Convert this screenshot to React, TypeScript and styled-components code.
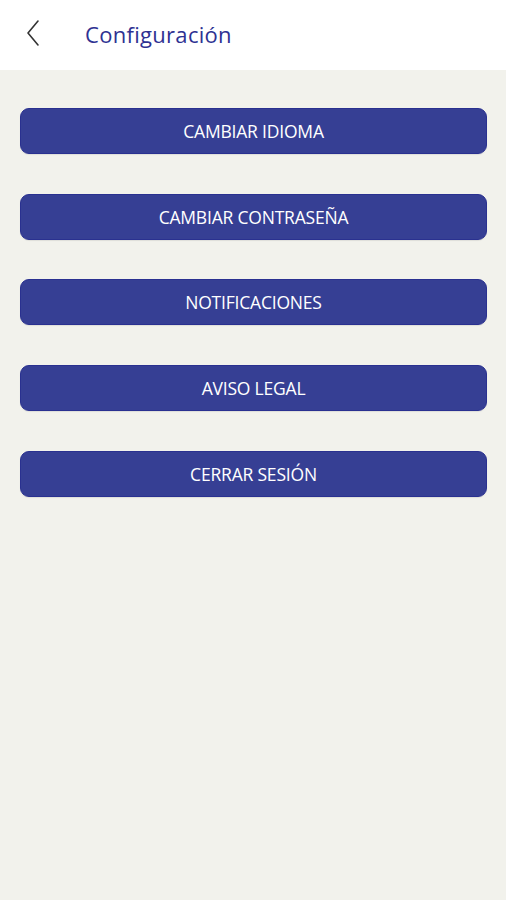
import React from 'react';
import styled, { createGlobalStyle } from 'styled-components';

const GlobalStyle = createGlobalStyle`
  html, body {
    margin: 0;
    padding: 0;
    background: #f2f2ec;
  }
  body {
    font-family: "Open Sans", "Noto Sans", sans-serif;
  }
`;

const OPTIONS = [
  'CAMBIAR IDIOMA',
  'CAMBIAR CONTRASEÑA',
  'NOTIFICACIONES',
  'AVISO LEGAL',
  'CERRAR SESIÓN',
];

export default function App() {
  return (
    <>
      <GlobalStyle />
      <Screen>
        <Header>
          <BackButton aria-label="Volver">
            <svg width="16" height="28" viewBox="0 0 16 28" fill="none">
              <path d="M13 2 L3 14 L13 26" stroke="#333" strokeWidth="1.6" strokeLinecap="round" strokeLinejoin="round" />
            </svg>
          </BackButton>
          <Title>Configuración</Title>
        </Header>

        <List>
          {OPTIONS.map((label) => (
            <OptionButton key={label}>{label}</OptionButton>
          ))}
        </List>
      </Screen>
    </>
  );
}

const Screen = styled.div`
  min-height: 900px;
  background: #f2f2ec;
`;

const Header = styled.header`
  height: 70px;
  background: #ffffff;
  display: flex;
  align-items: center;
  padding-left: 25px;
  box-sizing: border-box;
`;

const BackButton = styled.button`
  border: none;
  background: none;
  padding: 0;
  width: 16px;
  height: 28px;
  display: flex;
  align-items: center;
  margin-top: -4px;
`;

const Title = styled.h1`
  margin: -2px 0 0 44px;
  font-family: "Open Sans", "Noto Sans", sans-serif;
  font-weight: 400;
  font-size: 22px;
  color: #2e3192;
  letter-spacing: 0.3px;
`;

const List = styled.div`
  display: flex;
  flex-direction: column;
  gap: 39.7px;
  padding: 38px 19px 0 20px;
`;

const OptionButton = styled.button`
  height: 46px;
  width: 100%;
  border: 1px solid #2a3190;
  border-radius: 9px;
  background: #363f94;
  color: #ffffff;
  font-family: "Open Sans", "Noto Sans", sans-serif;
  font-size: 17.5px;
  font-weight: 500;
  letter-spacing: -0.2px;
  box-shadow: 0 1px 1px rgba(0, 0, 0, 0.08);
`;
